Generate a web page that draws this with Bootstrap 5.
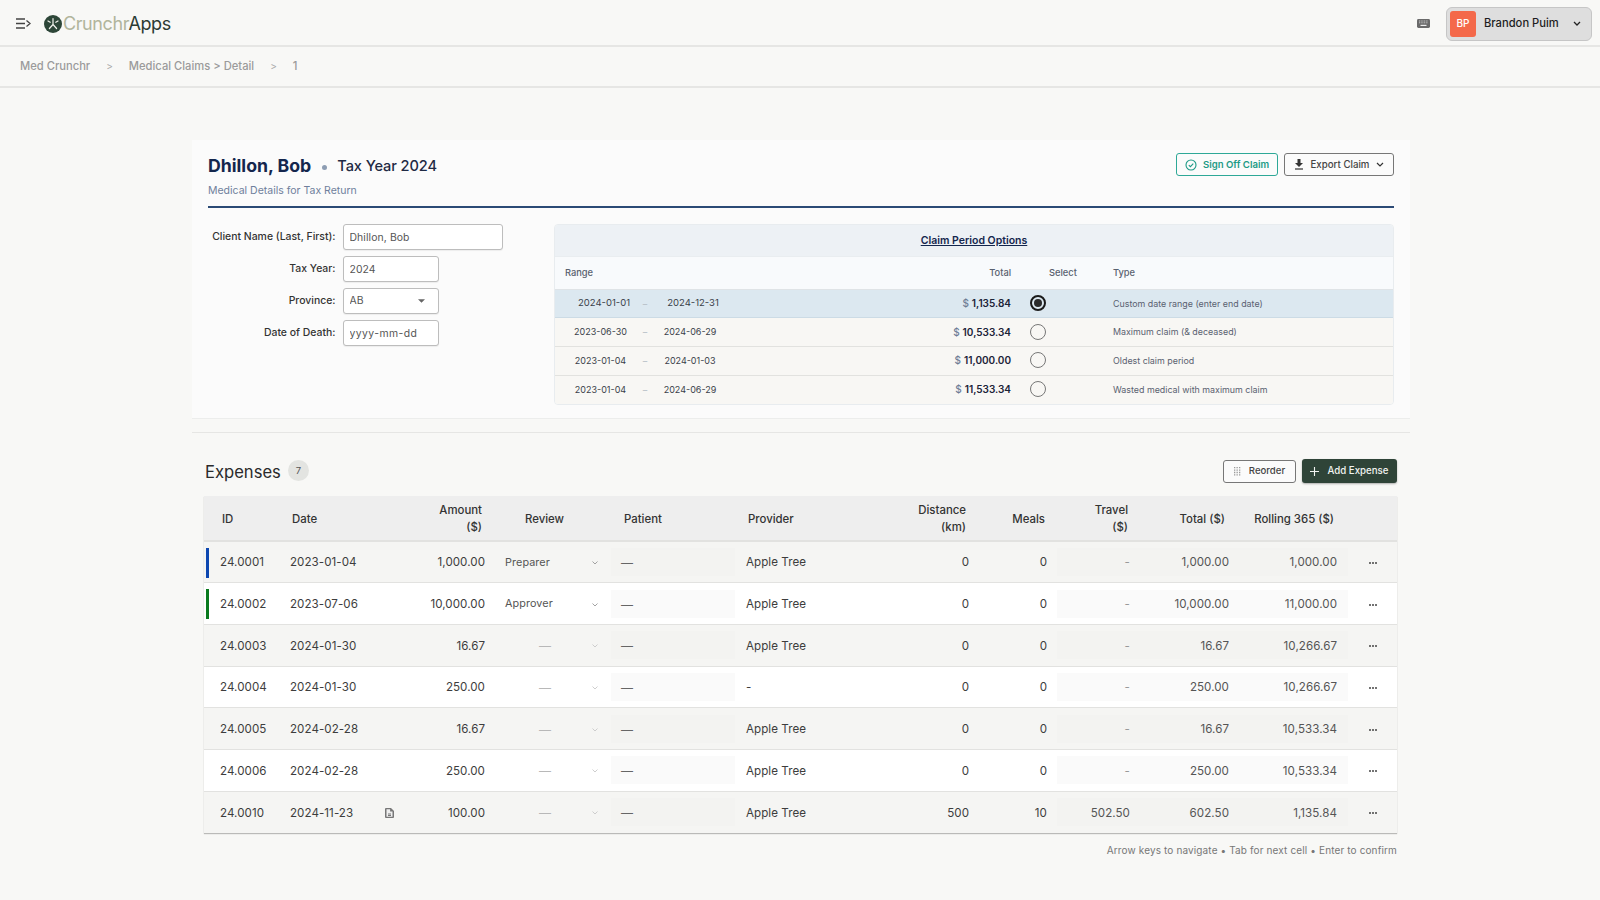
<!doctype html>
<html lang="en">
<head>
<meta charset="utf-8">
<title>Medical Claims Detail</title>
<link href="https://cdn.jsdelivr.net/npm/bootstrap@5.3.0/dist/css/bootstrap.min.css" rel="stylesheet">
<style>
body{background:#f8f8f6;font-family:Inter,"Liberation Sans",sans-serif;font-size:12px;color:#333;overflow:hidden;height:900px}
.top-bar{height:47px;border-bottom:2px solid #e6e6e4;padding:2px 8px 0 16px}
.logo-word{font-size:18px;letter-spacing:-.4px;line-height:1;margin-left:1px;color:#b1b59c;font-weight:400}
.logo-word span{color:#2c3b33}
.logo-mark{margin-left:-3px}
.user-btn{width:146px;height:34px;background:#dedede;border:1px solid #c6c6c6;border-radius:6px;padding:0 10px 0 3px;color:#1d1d1d;font-weight:500;font-size:11.2px}
.user-ava{width:26px;height:26px;background:#f4694a;color:#fff;border-radius:3px;font-size:10px;font-weight:500;margin-right:8px}
.crumbs{height:41px;border-bottom:2px solid #e6e6e4;padding:0 0 0 20px;color:#9b9b9b;font-size:11.2px;font-weight:500}
.crumb-sep{color:#aaa;font-size:10px;font-weight:400}
.sheet{width:1218px;margin:52px 0 0 192px}
.claim-card{background:#fbfbfb;border-bottom:1px solid #ecedec;height:279px;padding:13px 16px 0}
.claim-head{height:55px;border-bottom:2px solid #2b4a75}
.claim-name{font-size:17.7px;font-weight:700;color:#14264d;line-height:24px}
.claim-dot{width:5px;height:5px;border-radius:50%;background:#8d9db3;margin:4px 10px 0 11px}
.claim-year{font-size:14.6px;font-weight:500;color:#1f2a44;line-height:24px;letter-spacing:-.1px;padding-top:1px}
.claim-sub{font-size:10.5px;color:#6f7f9c;margin-top:6px;line-height:14px}
.act-btn{height:23px;font-size:9.7px;font-weight:500;padding:0 6px;border-radius:3px;background:#fbfbfb;line-height:1;white-space:nowrap}
.btn-sign{width:102px;color:#1d9a86;border:1px solid #2ea897;font-weight:600;font-size:9.6px}
.btn-sign:hover{color:#1d9a86;border-color:#2ea897}
.btn-sign svg{margin-right:6px}
.btn-exp{width:110px;color:#444;border:1px solid #777;padding:0 9px}
.form-col{width:346px;padding-top:16px}
.form-line{height:26px;margin-bottom:6px}
.form-line label{width:127.5px;text-align:right;margin-right:7px;font-size:10.45px;font-weight:500;color:#333}
.fld.form-control,.fld.form-select{height:26px;min-height:0;width:96px;font-size:10.4px;padding:0 6px;border:1px solid #bdbdbd;border-radius:3px;color:#555;background-color:#fff;box-shadow:0 1px 1px rgba(0,0,0,.06);letter-spacing:.1px}
.fld.fld-wide{width:160px}
.fld::placeholder{color:#555;opacity:1;letter-spacing:.45px}
.fld.form-select{background-image:url("data:image/svg+xml,%3csvg xmlns='http://www.w3.org/2000/svg' viewBox='0 0 8 4'%3e%3cpath fill='%23666' d='M0 0h8L4 4z'/%3e%3c/svg%3e");background-size:7px 4px;background-position:right 13px center}
.period-box{width:840px;margin-top:16px;height:181px;border:1px solid #e8ecef;border-radius:4px;overflow:hidden}
.period-title{height:32px;background:#edf1f5;font-size:10.5px;font-weight:600;color:#14264d;text-decoration:underline;border-bottom:1px solid #e9edf0}
.period-tbl.table{margin:0;table-layout:fixed;--bs-table-bg:transparent;--bs-table-border-color:#e2e2df;font-size:9px;color:#3a3f4a}
.period-tbl.table th{height:32px;padding:0;background:#f8fafc;font-weight:500;color:#59616f;font-size:9.3px;vertical-align:middle;border-bottom:1px solid #dfe3e6}
.period-tbl.table td{height:28.75px;padding:0;vertical-align:middle;background:#f8f7f4;color:#3a3f4a;border-bottom:1px solid #e2e2df}
.period-tbl.table tr.on td{background:#dce8f0;border-bottom-color:#ccdbe5}
.period-tbl.table tr:last-child td{border-bottom:0}
.period-tbl.table td.per-from{padding-left:12px;text-align:center}
.period-tbl.table td.per-to{padding-right:44px;text-align:center}
.period-tbl.table tr.on td.per-from{padding-left:19px;font-size:9.5px}
.period-tbl.table tr.on td.per-to{padding-right:38px;font-size:9.5px}
.period-tbl.table td.per-amt{font-size:10px;font-weight:600;color:#1b2338}
.per-cur{color:#6d7c94;font-weight:500;margin-right:3px}
.period-tbl.table td.per-dash{color:#b4bcc4;text-align:center}
.period-tbl.table td.per-type{color:#5a6170;font-size:8.9px}
.th-range{padding-left:10px!important}
.th-select{padding-left:38px!important}
.radio-dot{width:16px;height:16px;border-radius:50%;border:1.5px solid #777;background:transparent;display:block;margin-top:-1px}
.radio-dot.picked{border:2px solid #1a1a1a;padding:2px}
.radio-dot.picked::after{content:"";display:block;width:8px;height:8px;border-radius:50%;background:#2b2b2b}
.sep-line{border:0;border-top:1px solid #e6e6e4;margin:13px 0 0;opacity:1}
.exp-wrap{padding:0 13px 0 12px}
.exp-top{height:63px;padding-top:13px}
.exp-title{font-size:16.6px;color:#2b2b2b;margin:2px 0 0 1px}
.exp-count{width:21px;height:21px;border-radius:50%;background:#e3e4e1;color:#555;font-size:9.5px;margin-left:7px}
.btn-reorder{width:73px;height:23px;background:#fbfbfb;border:1px solid #777;border-radius:3px;font-size:9.6px;font-weight:500;color:#444;padding:0;line-height:1}
.btn-add{width:95px;height:24px;background:#2f4438;border:0;border-radius:3px;color:#f1f3f0;font-size:9.7px;font-weight:500;padding:0;line-height:1;box-shadow:0 1px 2px rgba(0,0,0,.3)}
.btn-add:hover{background:#2f4438;color:#f1f3f0}
.btn-gap{gap:6px}
.exp-tbl.table{margin:0;table-layout:fixed;width:1193px;--bs-table-bg:transparent;--bs-table-border-color:#e2e2e0;color:#3d3d3d;font-size:12px;box-shadow:0 1px 1px rgba(0,0,0,.25)}
.exp-tbl.table th{height:45px;background:#eeeeee;border-bottom:2px solid #e2e2e0;padding:2px 12px 0;font-weight:500;color:#333;font-size:11.4px;line-height:17px;vertical-align:middle}
.exp-tbl.table th.th-id{padding-left:18px}
.exp-tbl.table th.th-review{padding-left:31px}
.exp-tbl.table th.th-patient{padding-left:18px}
.exp-tbl.table th.th-provider{padding-left:8px}
.exp-tbl.table th.th-dist{padding-right:13px}
.exp-tbl.table th.th-meals{padding-right:12px}
.exp-tbl.table th.th-total,.exp-tbl.table th.th-roll{padding-right:14px}
.exp-tbl.table td{height:41.7px;padding:2px 10px 0;vertical-align:middle;border-bottom:1px solid #e2e2e0;color:#3d3d3d;font-size:11.6px;letter-spacing:.05px}
.exp-tbl.table tbody tr:nth-child(odd) td{background:#f5f5f3}
.exp-tbl.table tbody tr:nth-child(even) td{background:#fff}
.exp-tbl.table tr:last-child td{border-bottom:0}
.exp-tbl.table td.pad-0{padding:0}
.exp-tbl.table td.id-cell{position:relative;padding-left:16px}
.exp-tbl.table td.prov-cell{padding-left:6px}
.exp-tbl.table td.amt-cell{padding-right:9px}
.flag-bar{position:absolute;left:1.5px;top:5.5px;width:3px;height:30px}
.cell-box{height:28px;display:flex;align-items:center;background:#f3f3f1;padding:2px 10px 0;color:#555}
.exp-tbl.table tbody tr:nth-child(even) .cell-box{background:#fafafa}
.patient-box{margin:0 5px}
.box-last{padding-right:11px}
.nil-mark{color:#999}
.doc-ico{margin-right:-4px}
.more-dots{margin-top:2px}
.review-cell{height:28px;padding:2px 8px 0 11px;font-size:10.8px;color:#555;letter-spacing:.1px}
.dash-muted{color:#b8b8b8;margin-left:34px;font-size:12px}
.dash-dark{color:#666;font-size:12px}
.foot-hint{text-align:right;margin-top:10px;font-size:10px;color:#777;letter-spacing:.13px}
</style>
</head>
<body>
<header class="top-bar d-flex align-items-center justify-content-between">
  <div class="d-flex align-items-center">
    <svg width="15" height="11" viewBox="0 0 15 11" fill="none" stroke="#444" stroke-width="1.3" class="me-3"><path d="M0 1h9M0 5.5h9M0 10h9M10.5 2.5l3.5 3-3.5 3"/></svg>
    <svg width="18" height="18" viewBox="0 0 18 18" class="logo-mark"><circle cx="9" cy="9" r="9" fill="#2d4638"/><g stroke="#f3f3ee" stroke-width="1.2" stroke-linecap="round" fill="none"><path d="M9 3.5v6M9 9.5l-3.6 4M9 9.5l3.6 4"/><path d="M4 6l2.2 1.3M14 6l-2.2 1.3"/></g></svg>
    <div class="logo-word">Crunchr<span>Apps</span></div>
  </div>
  <div class="d-flex align-items-center">
    <svg width="13" height="9" viewBox="0 0 13 9" class="me-3"><rect width="13" height="9" rx="1.4" fill="#6a6a6a"/><path d="M2 2h9M2 3.8h9" stroke="#ddd" stroke-width=".8" stroke-dasharray="1 .7"/><path d="M3.5 6.4h6" stroke="#eee" stroke-width="1.2"/></svg>
    <button type="button" class="btn user-btn d-flex align-items-center">
      <span class="user-ava d-flex align-items-center justify-content-center">BP</span>
      <span class="flex-grow-1 text-start">Brandon Puim</span>
      <svg width="8" height="5" viewBox="0 0 8 5" fill="none" stroke="#222" stroke-width="1.3"><path d="M1 1l3 3 3-3"/></svg>
    </button>
  </div>
</header>
<nav class="crumbs d-flex align-items-center">
  <span>Med Crunchr</span><span class="crumb-sep ms-3 me-3">&gt;</span>
  <span>Medical Claims &gt; Detail</span><span class="crumb-sep ms-3 me-3">&gt;</span>
  <span>1</span>
</nav>
<main class="sheet">
  <section class="claim-card">
    <div class="claim-head d-flex justify-content-between">
      <div>
        <div class="d-flex align-items-center"><span class="claim-name">Dhillon, Bob</span><span class="claim-dot"></span><span class="claim-year">Tax Year 2024</span></div>
        <div class="claim-sub">Medical Details for Tax Return</div>
      </div>
      <div class="d-flex btn-gap">
        <button type="button" class="btn act-btn btn-sign d-flex align-items-center justify-content-center">
          <svg width="12" height="12" viewBox="0 0 12 12" fill="none" stroke="#1d9a86" stroke-width="1.1"><circle cx="6" cy="6" r="5"/><path d="M3.8 6.1l1.6 1.6 2.9-3"/></svg>Sign Off Claim</button>
        <button type="button" class="btn act-btn btn-exp d-flex align-items-center justify-content-between">
          <svg width="10" height="11" viewBox="0 0 10 11"><path fill="#333" d="M3.5 0h3v4H9L5 8 1 4h2.5z"/><path d="M1 10h8" stroke="#333" stroke-width="1.2"/></svg><span>Export Claim</span>
          <svg width="8" height="5" viewBox="0 0 8 5" fill="none" stroke="#333" stroke-width="1.2"><path d="M1 1l3 3 3-3"/></svg></button>
      </div>
    </div>
    <div class="d-flex">
      <div class="form-col">
        <div class="form-line d-flex align-items-center"><label for="f1">Client Name (Last, First):</label><input id="f1" class="form-control fld fld-wide" value="Dhillon, Bob"></div>
        <div class="form-line d-flex align-items-center"><label for="f2">Tax Year:</label><input id="f2" class="form-control fld" value="2024"></div>
        <div class="form-line d-flex align-items-center"><label for="f3">Province:</label><select id="f3" class="form-select fld"><option>AB</option></select></div>
        <div class="form-line d-flex align-items-center"><label for="f4">Date of Death:</label><input id="f4" class="form-control fld" placeholder="yyyy-mm-dd"></div>
      </div>
      <div class="period-box">
        <div class="period-title d-flex align-items-center justify-content-center">Claim Period Options</div>
        <table class="table period-tbl">
          <colgroup><col style="width:79px"><col style="width:22px"><col style="width:112px"><col style="width:243px"><col style="width:53px"><col style="width:49px"><col></colgroup>
          <thead><tr><th class="th-range text-nowrap" colspan="3">Range</th><th class="text-end">Total</th><th class="th-select text-nowrap" colspan="2">Select</th><th>Type</th></tr></thead>
          <tbody>
            <tr class="on"><td class="per-from">2024-01-01</td><td class="per-dash">–</td><td class="per-to">2024-12-31</td><td class="text-end per-amt"><span class="per-cur">$</span>1,135.84</td><td><span class="radio-dot picked mx-auto"></span></td><td></td><td class="per-type">Custom date range (enter end date)</td></tr>
            <tr><td class="per-from">2023-06-30</td><td class="per-dash">–</td><td class="per-to">2024-06-29</td><td class="text-end per-amt"><span class="per-cur">$</span>10,533.34</td><td><span class="radio-dot mx-auto"></span></td><td></td><td class="per-type">Maximum claim (&amp; deceased)</td></tr>
            <tr><td class="per-from">2023-01-04</td><td class="per-dash">–</td><td class="per-to">2024-01-03</td><td class="text-end per-amt"><span class="per-cur">$</span>11,000.00</td><td><span class="radio-dot mx-auto"></span></td><td></td><td class="per-type">Oldest claim period</td></tr>
            <tr><td class="per-from">2023-01-04</td><td class="per-dash">–</td><td class="per-to">2024-06-29</td><td class="text-end per-amt"><span class="per-cur">$</span>11,533.34</td><td><span class="radio-dot mx-auto"></span></td><td></td><td class="per-type">Wasted medical with maximum claim</td></tr>
          </tbody>
        </table>
      </div>
    </div>
  </section>
  <hr class="sep-line">
  <section class="exp-wrap">
    <div class="exp-top d-flex align-items-center justify-content-between">
      <div class="d-flex align-items-center"><span class="exp-title">Expenses</span><span class="exp-count d-flex align-items-center justify-content-center">7</span></div>
      <div class="d-flex align-items-center btn-gap">
        <button type="button" class="btn btn-reorder d-flex align-items-center justify-content-center">
          <svg width="7" height="9" viewBox="0 0 7 9" fill="none" stroke="#999" stroke-width="1.3" stroke-dasharray="1.3 1.2" class="me-2"><path d="M0 .7h7M0 3.1h7M0 5.5h7M0 7.9h7"/></svg>Reorder</button>
        <button type="button" class="btn btn-add d-flex align-items-center justify-content-center">
          <svg width="9" height="9" viewBox="0 0 9 9" stroke="#f1f3f0" stroke-width="1.1" class="me-2"><path d="M4.5 0v9M0 4.5h9"/></svg>Add Expense</button>
      </div>
    </div>
    <table class="table exp-tbl">
      <colgroup><col style="width:76px"><col style="width:120px"><col style="width:94px"><col style="width:112px"><col style="width:134px"><col style="width:140px"><col style="width:99px"><col style="width:78px"><col style="width:83px"><col style="width:99px"><col style="width:109px"><col></colgroup>
      <thead><tr><th class="th-id">ID</th><th>Date</th><th class="text-end">Amount<br>($)</th><th class="th-review">Review</th><th class="th-patient">Patient</th><th class="th-provider">Provider</th><th class="text-end th-dist">Distance<br>(km)</th><th class="text-end th-meals">Meals</th><th class="text-end">Travel<br>($)</th><th class="text-end text-nowrap th-total">Total ($)</th><th class="text-end text-nowrap th-roll">Rolling 365 ($)</th><th></th></tr></thead>
      <tbody id="rows"></tbody>
    </table>
    <div class="foot-hint">Arrow keys to navigate • Tab for next cell • Enter to confirm</div>
  </section>
</main>
<script>
const data=[
["24.0001","2023-01-04","1,000.00","Preparer","Apple Tree","0","0","-","1,000.00","1,000.00","#0d47b0"],
["24.0002","2023-07-06","10,000.00","Approver","Apple Tree","0","0","-","10,000.00","11,000.00","#0a7a1e"],
["24.0003","2024-01-30","16.67","","Apple Tree","0","0","-","16.67","10,266.67"],
["24.0004","2024-01-30","250.00","","-","0","0","-","250.00","10,266.67"],
["24.0005","2024-02-28","16.67","","Apple Tree","0","0","-","16.67","10,533.34"],
["24.0006","2024-02-28","250.00","","Apple Tree","0","0","-","250.00","10,533.34"],
["24.0010","2024-11-23","100.00","","Apple Tree","500","10","502.50","602.50","1,135.84","",1]];
const chev=c=>`<svg width="6" height="4" viewBox="0 0 6 4" fill="none" stroke="${c}" stroke-width=".9"><path d="M.5.5L3 3 5.5.5"/></svg>`;
document.getElementById('rows').innerHTML=data.map(r=>`<tr>
<td class="id-cell">${r[10]?`<span class="flag-bar" style="background:${r[10]}"></span>`:''}${r[0]}</td>
<td><div class="d-flex align-items-center justify-content-between">${r[1]}${r[11]?`<svg width="9" height="10" viewBox="0 0 9 10" class="doc-ico"><path fill="#777" d="M1 0h5l3 3v6a1 1 0 0 1-1 1H1a1 1 0 0 1-1-1V1a1 1 0 0 1 1-1z"/><path fill="#eee" d="M1.5 1.2h3.6v2.4h2.4v5.2H1.5z"/><path d="M3 6h3M3 7.5h3" stroke="#777"/></svg>`:''}</div></td>
<td class="text-end amt-cell">${r[2]}</td>
<td class="pad-0"><div class="review-cell d-flex align-items-center justify-content-between">${r[3]?`<span>${r[3]}</span>`:'<span class="dash-muted">—</span>'}${chev(r[3]?'#999':'#c8c8c8')}</div></td>
<td class="pad-0"><div class="cell-box patient-box dash-dark">—</div></td>
<td class="prov-cell">${r[4]}</td>
<td class="text-end">${r[5]}</td>
<td class="text-end">${r[6]}</td>
<td class="pad-0"><div class="cell-box justify-content-end">${r[7]==='-'?'<span class="nil-mark">-</span>':r[7]}</div></td>
<td class="pad-0"><div class="cell-box justify-content-end">${r[8]}</div></td>
<td class="pad-0"><div class="cell-box box-last justify-content-end">${r[9]}</div></td>
<td class="pad-0 text-center"><svg width="8" height="2" viewBox="0 0 8 2" fill="#444" class="more-dots"><circle cx="1" cy="1" r="1"/><circle cx="4" cy="1" r="1"/><circle cx="7" cy="1" r="1"/></svg></td>
</tr>`).join('');
</script>
<script src="https://cdn.jsdelivr.net/npm/bootstrap@5.3.0/dist/js/bootstrap.bundle.min.js"></script>
</body>
</html>
